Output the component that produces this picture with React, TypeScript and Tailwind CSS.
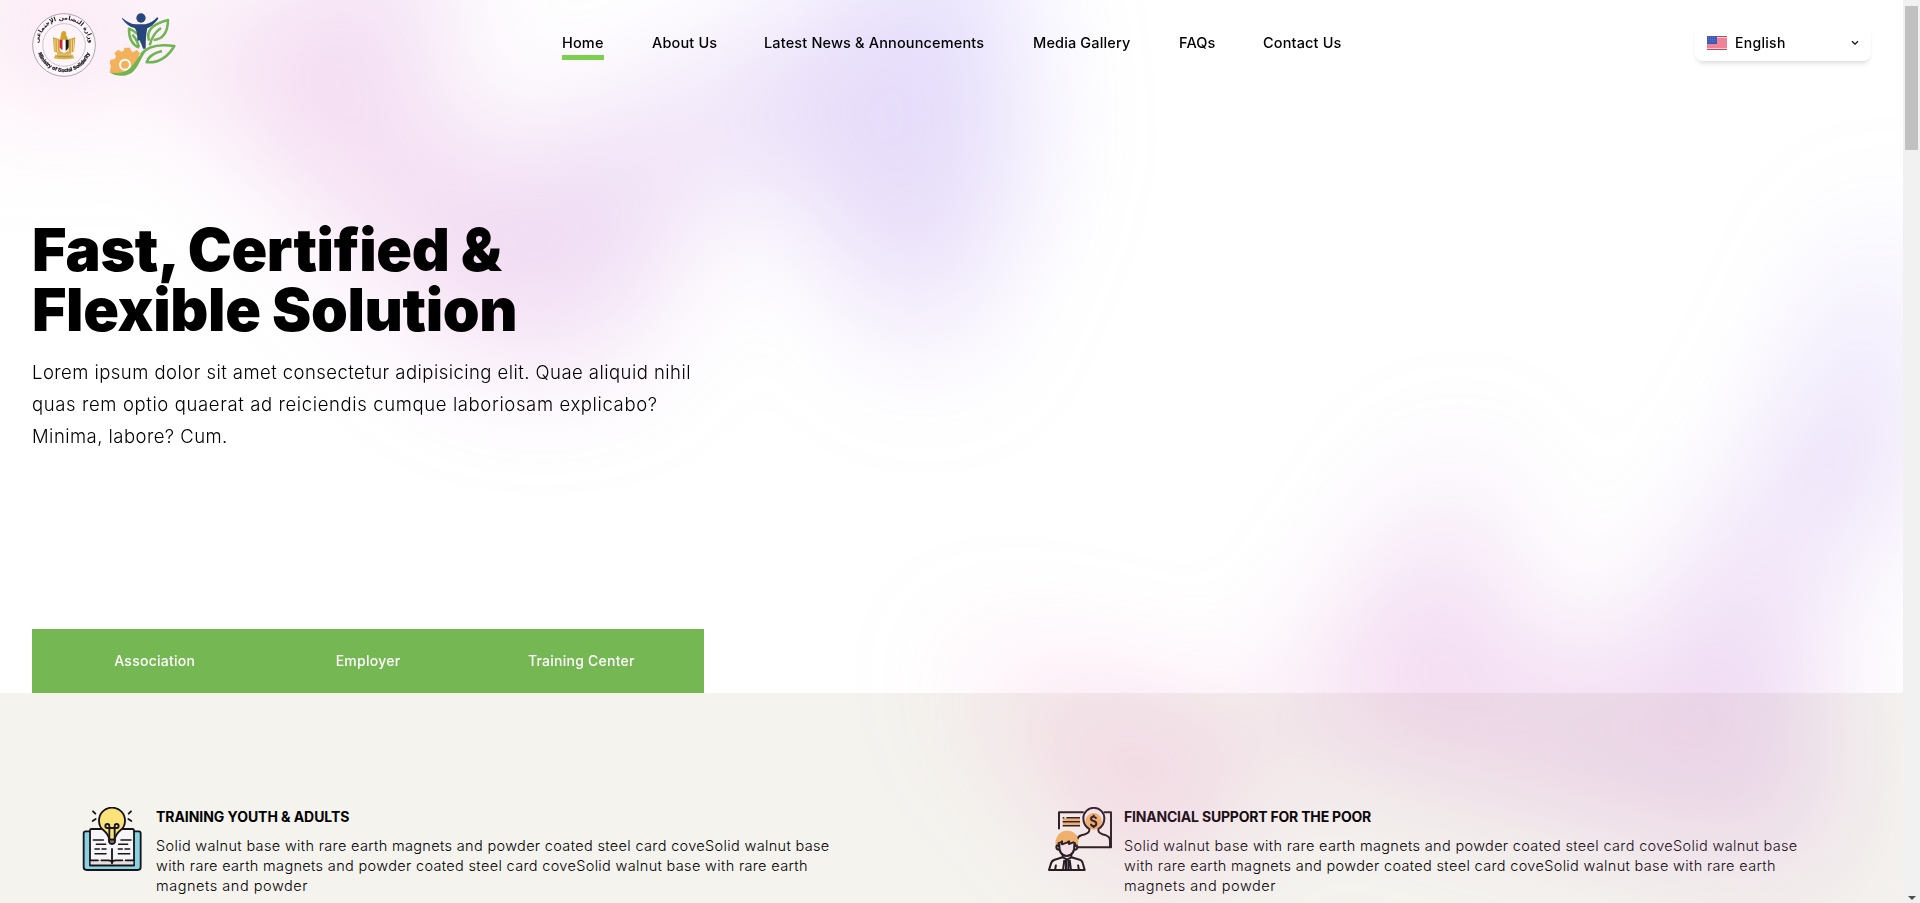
import type { ReactNode } from 'react';

const blob =
  'relative aspect-[1155/678] w-[1155px] -translate-x-1/2 bg-[linear-gradient(to_top_right,#ff80b5,#9089fc)] opacity-30 [clip-path:polygon(74.1%_44.1%,100%_61.6%,97.5%_26.9%,85.5%_0.1%,80.7%_2%,72.5%_32.5%,60.2%_62.4%,52.4%_68.1%,47.5%_58.3%,45.2%_34.5%,27.5%_76.7%,0.1%_64.9%,17.9%_100%,27.6%_76.8%,76.1%_97.7%,74.1%_44.1%)]';

const navItems = [
  { label: 'Home', width: 'w-[42px]', active: true },
  { label: 'About Us', width: 'w-16' },
  { label: 'Latest News & Announcements', width: 'w-[221px]' },
  { label: 'Media Gallery', width: 'w-[98px]' },
  { label: 'FAQs', width: 'w-[36px]' },
  { label: 'Contact Us', width: 'w-[79px]' },
];

function MinistryLogo() {
  return (
    <svg viewBox="36 39 192 192" className="size-16">
      <defs>
        <path id="arcTop" d="M61 162a76 76 0 1 1 142 0" />
        <path id="arcBottom" d="M51 135a81 81 0 0 0 162 0" />
      </defs>
      <circle cx="132" cy="135" r="94" fill="#fff" fillOpacity=".45" stroke="#77727a" strokeWidth="1.8" />
      <circle cx="132" cy="135" r="64" fill="none" stroke="#a9a3aa" strokeWidth="1.8" />
      <text fontFamily="DejaVu Sans, sans-serif" fontSize="18.5" fontWeight="700" fill="#1d1b1e">
        <textPath href="#arcTop" startOffset="50%" textAnchor="middle">وزارة التضامن الإجتماعى</textPath>
      </text>
      <text fontFamily="Liberation Sans, sans-serif" fontSize="15.5" fontWeight="700" fill="#111" stroke="#111" strokeWidth=".7">
        <textPath href="#arcBottom" startOffset="50%" textAnchor="middle">Ministry of Social Solidarity</textPath>
      </text>
      <path d="M99 112l20 6v42l-17-5zM166 112l-20 6v42l16-5z" fill="#d0a23c" />
      <path d="M105 117v38M112 118v38M161 117v38M154 118v38" stroke="#f6e3a4" strokeWidth="2.5" />
      <path d="M124 99q3-8 11-5 6 3 3 10l5 10v8h-22v-8z" fill="#d5a22b" />
      <path d="M119 119h9v32q-8-4-9-10z" fill="#cf2330" />
      <path d="M128 119h9v34l-5 2-4-4z" fill="#fff" />
      <path d="M137 119h9v22q-2 8-9 12z" fill="#191919" />
      <path d="M116 151l16 8 17-8 5 13h-44z" fill="#dab45a" />
      <path d="M106 164h52l5 11q-31 6-62 0z" fill="#d9b14c" />
      <path d="M112 170h42" stroke="#a98430" strokeWidth="2" />
    </svg>
  );
}

function ProgramLogo() {
  return (
    <svg viewBox="264 39 204 192" className="h-16 w-[68px]">
      <path
        d="M269 217l4-21-4-4 2-13 13-2 4-8-5-9 11-11 11 6 6-3 2-9h17l3 10 7 3 10-6 10 9-5 10 3 7-22 36q-12 12-40 11z"
        fill="#f4b15c"
      />
      <circle cx="315" cy="194" r="15" fill="#f4b15c" stroke="#fff" strokeWidth="6" />
      <path d="M268 217q39 7 59-10 13-11 27-34 10-17 27-24-14 19-22 37-16 37-45 41-26 3-46-10z" fill="#6fb551" />
      <path d="M357 143q-31-14-30-57 35 14 37 42M337 104q15 16 20 38" fill="none" stroke="#6fb551" strokeWidth="7.5" strokeLinejoin="round" />
      <path d="M387 122q-14-44 57-62-1 56-43 60M423 84q-25 16-34 52" fill="none" stroke="#6fb551" strokeWidth="7.5" strokeLinejoin="round" />
      <path d="M363 164q26-37 100-26-29 49-75 49h-8q6-24 46-34" fill="none" stroke="#6fb551" strokeWidth="7.5" strokeLinejoin="round" />
      <circle cx="363" cy="54" r="14" fill="#27467b" />
      <path d="M306 53q23 19 42 20h28q20-4 36-22l3 5q-17 22-33 29-5 20-5 61h-8l-9-25-8 1q1-29-8-38-22-5-38-28z" fill="#27467b" />
    </svg>
  );
}

function FlagIcon() {
  return (
    <svg viewBox="0 0 60 42" className="h-[14px] w-5" shapeRendering="crispEdges">
      <path d="M0 0h60v42H0z" fill="#ee8396" />
      <path d="M0 0h60v3H0zM0 39h60v3H0z" fill="#e03a55" />
      <path d="M0 3h60v3H0zM0 36h60v3H0z" fill="#fbd7de" />
      <path d="M0 0h30v23H0z" fill="#3d58b5" />
      <path d="M4 5h24M4 11h24M4 17h24" stroke="#6f86d2" strokeWidth="2" strokeDasharray="3 3" />
    </svg>
  );
}

function TrainingIcon() {
  return (
    <svg viewBox="30 50 192 192" className="size-16 shrink-0" fill="none" stroke="#16161a" strokeWidth="5.5" strokeLinecap="round" strokeLinejoin="round">
      <path d="M58 123H47q-6 0-6 6v102q0 8 9 8h153q9 0 9-8V129q0-6-6-6h-12" fill="#8ad2e2" />
      <path d="M60 225V120q0-4 5-4h122q5 0 5 4v105z" fill="#f8f5f8" />
      <path d="M62 210h56q8 0 8 7 0-7 8-7h56v14H62z" fill="#eadde0" stroke="none" />
      <path d="M60 210h24M94 210h21q11 0 11 9 0-9 11-9h20M167 210h25M60 225h132M126 176v40" />
      <path d="M70 149h30M79 162h28M75 176h13M96 176h12M75 190h33M153 149h30M146 162h27M145 176h12M165 176h14M145 190h34" strokeWidth="4.5" />
      <path d="M118 148q-2-15-18-29-13-10-13-28a39 39 0 0 1 78 0q0 18-13 28-16 14-18 29z" fill="#fbe27a" />
      <path d="M118 145V113M134 145V113M118 113h-6a6 6 0 1 1 6-6zM134 113h6a6 6 0 1 0-6-6zM118 113h16" />
      <path d="M117 148h18v7q-2 6-9 6t-9-6z" fill="#77737c" />
      <path d="M69 63l7 7M68 92l9-6M183 63l-7 7M184 92l-9-6" />
    </svg>
  );
}

function FinanceIcon() {
  return (
    <svg viewBox="12 20 192 192" className="size-16 shrink-0" fill="none" stroke="#1d171b" strokeWidth="6" strokeLinejoin="round">
      <path d="M45 87V36h74M179 36h22v105H100" />
      <path d="M56 58h52M56 70h52" stroke="#efb565" strokeWidth="8" />
      <path d="M56 52h5M67 52h41M56 64h52M56 76h52" strokeWidth="4.5" />
      <circle cx="149" cy="63" r="25" fill="#efb565" stroke="none" />
      <path d="M99 119q2-11 13-14 24-5 24-15v-4q-18-10-18-32a31 31 0 0 1 63 0q0 22-18 32v4q0 10 23 15 12 4 12 16v20" />
      <path d="M157 55q-2-6-8-6-8 0-8 6 0 5 8 7t8 8q0 7-8 7t-8-7M149 43v7M149 77v6" />
      <path d="M35 134q-3-17 8-31 11-13 27-12 17 0 27 13 8 13 5 31z" fill="#efb565" stroke="none" />
      <path d="M47 134q1-6 8-6l5 4 14-7 8 6 9-2v13q-2 24-22 25-22-1-22-25z" fill="#f6e8ed" stroke="none" />
      <path d="M45 135q-8-2-8 5 0 8 9 9M92 135q8-2 8 5 0 8-9 9M46 131q-2 34 22 36 25-2 23-36M44 140v-12q8-1 10-5v9l15-5 6-4v8l13-5 5 3v11" />
      <path d="M56 162v9l-24 7q-10 3-12 15l-5 16h107l-5-18q-2-10-10-13l-25-7v-9M57 171l12 7 13-7M61 179l-4 31M77 179l4 31M66 179v31M73 179v31M36 193l-3 17M102 193l3 17" />
    </svg>
  );
}

function Feature({ icon, title, titleClass }: { icon: ReactNode; title: string; titleClass: string }) {
  return (
    <article className="flex w-[968px] shrink-0 gap-3">
      {icon}
      <div className="whitespace-nowrap">
        <h2 className={`text-[14px] leading-5 font-bold ${titleClass}`}>{title}</h2>
        <p className="mt-[9px] text-[14.5px] leading-5 font-light tracking-[0.34px]">
          Solid walnut base with rare earth magnets and powder coated steel card coveSolid walnut base
          <br />
          with rare earth magnets and powder coated steel card coveSolid walnut base with rare earth
          <br />
          <span className="tracking-[0.54px]">magnets and powder</span>
        </p>
      </div>
    </article>
  );
}

export default function App() {
  return (
    <div className="flex h-screen overflow-hidden bg-white font-[Inter,sans-serif] text-black">
      <div className="h-full w-[1903px] shrink-0 overflow-hidden">
        <div className="relative isolate flex h-[693px] flex-col px-8">
          <div className="absolute inset-x-0 -top-80 -z-10 transform-gpu overflow-hidden blur-3xl">
            <div className={`${blob} left-[calc(50%-30rem)] rotate-30`} />
          </div>
          <div className="absolute inset-x-0 top-[calc(100%-30rem)] -z-10 transform-gpu overflow-hidden blur-3xl">
            <div className={`${blob} left-[calc(50%+36rem)]`} />
          </div>

          <header className="flex h-[90px] items-start justify-between pt-[13px]">
            <div className="flex w-[530px] gap-3">
              <MinistryLogo />
              <ProgramLogo />
            </div>
            <nav className="flex flex-1 gap-12 pt-5 text-[14.5px] leading-5 font-medium tracking-[0.15px] whitespace-nowrap">
              {navItems.map((item) => (
                <a key={item.label} className={`${item.width} h-[27px] ${item.active ? 'border-b-5 border-[#7dd04e]' : ''}`}>
                  {item.label}
                </a>
              ))}
            </nav>
            <button className="mt-3 flex h-9 w-44 items-center rounded-lg bg-white px-3 text-[14px] font-medium tracking-[0.3px] shadow-[0_4px_5px_-2px_rgba(0,0,0,0.15)]">
              <FlagIcon />
              <span className="ml-2 pb-0.5">English</span>
              <svg viewBox="0 0 8 6" className="ml-auto h-1.5 w-2" fill="none" stroke="#111" strokeWidth="1.3">
                <path d="M1 1.3 4 4.2l3-2.9" />
              </svg>
            </button>
          </header>

          <h1 className="mt-[130px] text-[59px] leading-[60px] font-black tracking-[-0.35px]">
            Fast, Certified &amp;
            <br />
            Flexible Solution
          </h1>
          <p className="mt-4 text-[18.5px] leading-8 font-light tracking-[0.45px] whitespace-nowrap">
            Lorem ipsum dolor sit amet consectetur adipisicing elit. Quae aliquid nihil
            <br />
            <span className="tracking-[0.62px]">quas rem optio quaerat ad reiciendis cumque laboriosam explicabo?</span>
            <br />
            Minima, labore? Cum.
          </p>
          <div className="mt-auto grid h-16 w-[672px] grid-cols-3 items-center bg-[#75b753] px-4 pb-0.5 text-center text-[14px] font-medium tracking-[0.25px] text-white">
            <a>Association</a>
            <a>Employer</a>
            <a>Training Center</a>
          </div>
        </div>

        <section className="flex h-[300px] bg-[#f4f3ee] pt-[114px] pl-20">
          <Feature icon={<TrainingIcon />} title="TRAINING YOUTH & ADULTS" titleClass="tracking-[-0.05px]" />
          <Feature icon={<FinanceIcon />} title="FINANCIAL SUPPORT FOR THE POOR" titleClass="tracking-[-0.2px]" />
        </section>
      </div>

      <div className="flex w-[17px] flex-col items-center justify-between bg-[#f1f1f1] pt-1.5 pb-[3px]">
        <div className="h-36 w-[13px] bg-[#c1c1c1]" />
        <svg viewBox="0 0 8 4" className="h-1 w-2">
          <path d="M0 0h8L4 4z" fill="#505050" />
        </svg>
      </div>
    </div>
  );
}
